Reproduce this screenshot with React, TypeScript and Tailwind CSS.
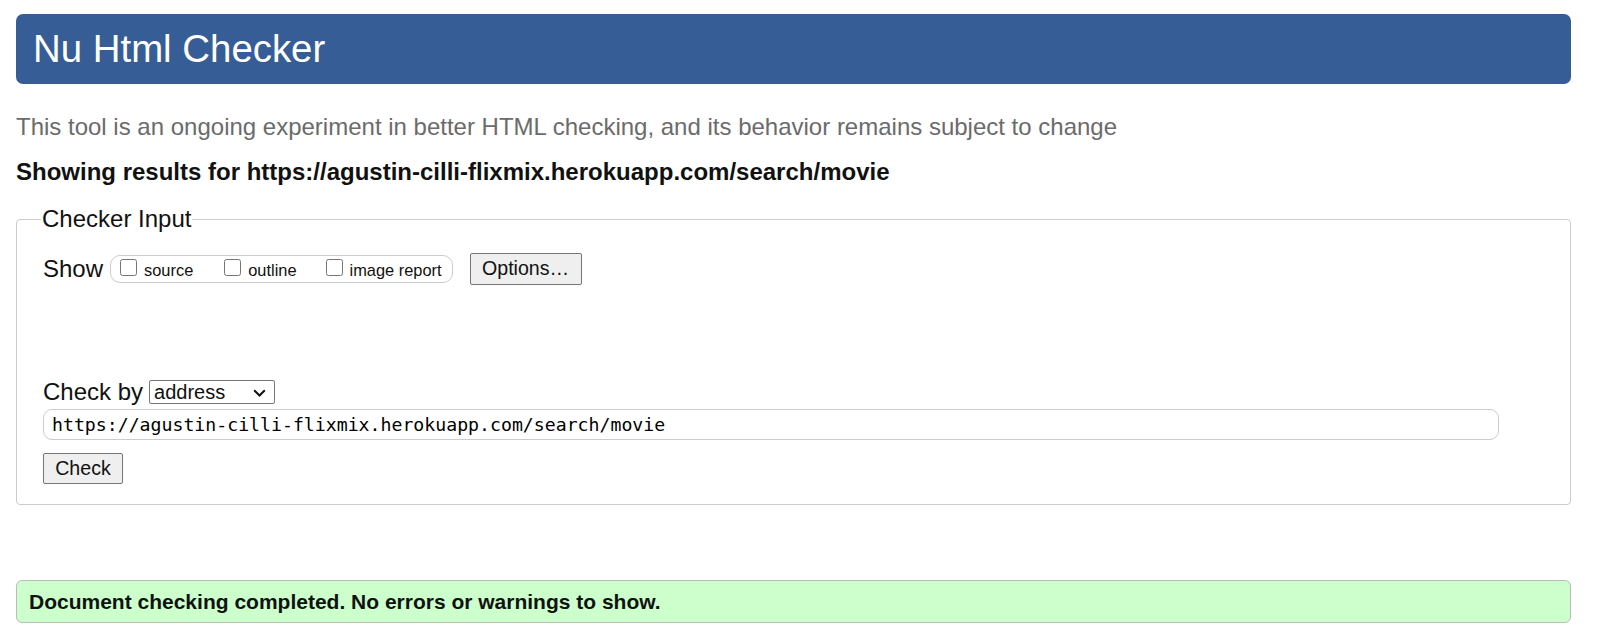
import React from 'react';

const App: React.FC = () => {
  const [show, setShow] = React.useState({ source: false, outline: false, image: false });
  const [url, setUrl] = React.useState('https://agustin-cilli-flixmix.herokuapp.com/search/movie');

  return (
    <div className="min-h-[631px] bg-white pl-4 pt-[14px] font-['Liberation_Sans',Arial,sans-serif] text-[#111]">
      <div className="w-[1555px]">
        {/* Header */}
        <h1 className="flex h-[70px] items-center rounded-[7px] bg-[#365d95] pl-[17px] text-[38.4px] font-normal text-white">
          Nu Html Checker
        </h1>

        <p className="mt-[28px] text-[24px] leading-[30px] text-[#6b6b6b]">
          This tool is an ongoing experiment in better HTML checking, and its behavior remains subject to change
        </p>
        <p className="mt-[15px] text-[24px] font-bold leading-[30px]">
          Showing results for https://agustin-cilli-flixmix.herokuapp.com/search/movie
        </p>

        {/* Checker input */}
        <fieldset className="mt-[18px] rounded-[4px] border border-[#ccc] pb-[20px] pl-[26px]">
          <legend className="ml-[-2px] px-[1px] text-[24px] leading-[28px]">Checker Input</legend>

          <div className="mt-[20px] flex h-[32px] items-center">
            <span className="text-[24px] leading-[28px]">Show</span>
            <div className="ml-[7px] flex h-[28px] items-center rounded-[10px] border border-[#ccc] pl-[9px] pr-[10px] text-[16.4px]">
              <label className="flex items-center">
                <input
                  type="checkbox"
                  checked={show.source}
                  onChange={() => setShow({ ...show, source: !show.source })}
                  className="m-0 h-[17px] w-[17px] -translate-y-[2px]"
                />
                <span className="ml-[7px] mt-[3px]">source</span>
              </label>
              <label className="ml-[31px] flex items-center">
                <input
                  type="checkbox"
                  checked={show.outline}
                  onChange={() => setShow({ ...show, outline: !show.outline })}
                  className="m-0 h-[17px] w-[17px] -translate-y-[2px]"
                />
                <span className="ml-[7px] mt-[3px]">outline</span>
              </label>
              <label className="ml-[29px] flex items-center">
                <input
                  type="checkbox"
                  checked={show.image}
                  onChange={() => setShow({ ...show, image: !show.image })}
                  className="m-0 h-[17px] w-[17px] -translate-y-[2px]"
                />
                <span className="ml-[7px] mt-[3px]">image report</span>
              </label>
            </div>
            <button className="ml-[17px] h-[32px] w-[112px] rounded-[2px] border border-[#767676] bg-[#efefef] text-[19.6px]">
              Options…
            </button>
          </div>

          <div className="mt-[94px] flex h-[26px] items-center">
            <span className="text-[24px] leading-[28px]">Check by</span>
            <div className="relative ml-[6px] h-[24px] w-[126px] rounded-[2px] border border-[#767676] bg-white">
              <span className="absolute left-[4px] top-[1px] text-[20px] leading-[21px]">address</span>
              <svg className="absolute right-[8px] top-[8px]" width="13" height="8" viewBox="0 0 13 8">
                <path d="M1.2 1.2l5.3 5.3 5.3-5.3" fill="none" stroke="#111" strokeWidth="2" />
              </svg>
            </div>
          </div>

          <input
            value={url}
            onChange={(e) => setUrl(e.target.value)}
            className="mt-[4px] block h-[31px] w-[1456px] rounded-[9px] border border-[#ccc] px-[8px] font-['DejaVu_Sans_Mono',monospace] text-[18.2px] text-black outline-none"
          />

          <button className="mt-[13px] block h-[31px] w-[80px] rounded-[2px] border border-[#767676] bg-[#efefef] text-[19.6px]">
            Check
          </button>
        </fieldset>

        {/* Success message */}
        <div className="mt-[75px] flex h-[43px] items-center rounded-[6px] border border-[#bbb] bg-[#ccffcc] px-[12px] text-[21px] font-bold">
          Document checking completed. No errors or warnings to show.
        </div>
      </div>
    </div>
  );
};

export default App;
